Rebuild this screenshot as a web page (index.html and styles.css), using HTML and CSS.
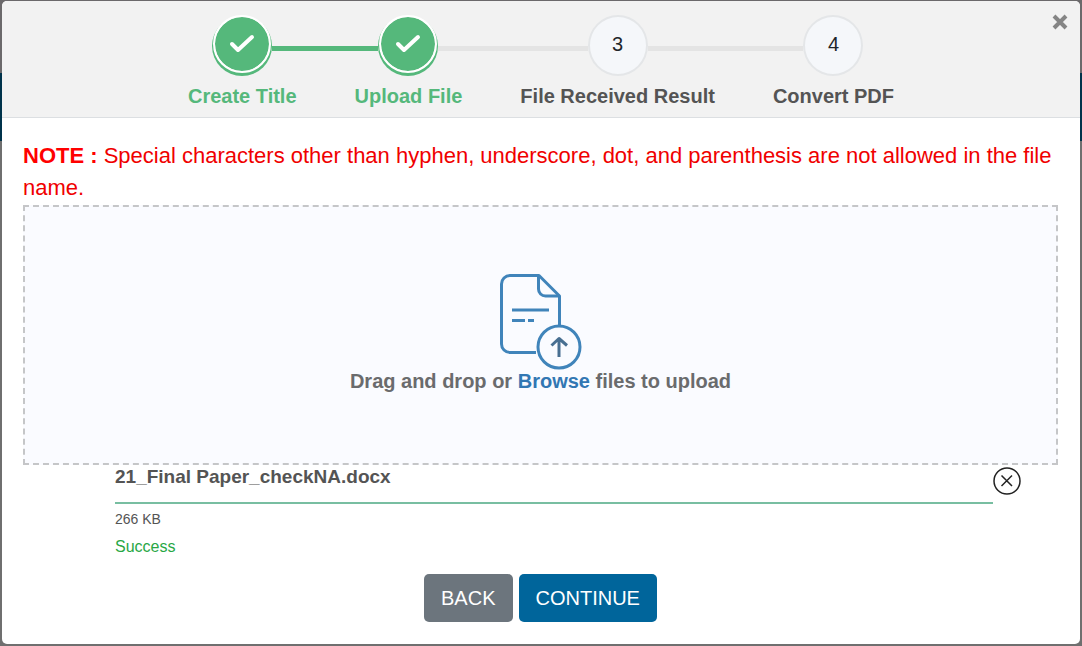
FILE: index.html
```html
<!DOCTYPE html>
<html lang="en">
<head>
<meta charset="utf-8">
<meta name="viewport" content="width=device-width, initial-scale=1">
<title>Upload File</title>
<link rel="stylesheet" href="styles.css">
</head>
<body>
<main class="modal" role="dialog" aria-label="Upload File">
  <header class="modal-header">
    <ol class="steps">
      <li class="step done">
        <div class="track">
          <span class="line hidden"></span>
          <span class="circle"><svg viewBox="0 0 26 20" aria-hidden="true"><path d="M3 10 9 16 23 3"/></svg></span>
          <span class="line filled"></span>
        </div>
        <span class="step-label">Create Title</span>
      </li>
      <li class="step done">
        <div class="track">
          <span class="line filled"></span>
          <span class="circle"><svg viewBox="0 0 26 20" aria-hidden="true"><path d="M3 10 9 16 23 3"/></svg></span>
          <span class="line"></span>
        </div>
        <span class="step-label">Upload File</span>
      </li>
      <li class="step">
        <div class="track">
          <span class="line"></span>
          <span class="circle">3</span>
          <span class="line"></span>
        </div>
        <span class="step-label">File Received Result</span>
      </li>
      <li class="step">
        <div class="track">
          <span class="line"></span>
          <span class="circle">4</span>
          <span class="line hidden"></span>
        </div>
        <span class="step-label">Convert PDF</span>
      </li>
    </ol>
    <button class="close" type="button" aria-label="Close">
      <svg viewBox="0 0 16 16" aria-hidden="true"><path d="M2 2 14 14M14 2 2 14"/></svg>
    </button>
  </header>
  <section class="modal-body">
    <p class="note"><strong>NOTE :</strong> Special characters other than hyphen, underscore, dot, and parenthesis are not allowed in the file name.</p>
    <div class="dropzone">
      <svg class="upload-icon" viewBox="0 0 82 96" aria-hidden="true">
        <path d="M36 78.500H10A8.500 8.500 0 0 1 1.500 70V10A8.500 8.500 0 0 1 10 1.500H39L59.500 22V51"/>
        <path d="M38.500 1.500V15A7 7 0 0 0 45.500 22H59.500"/>
        <path d="M12 36H49M12 46.500H25M28 46.500H34"/>
        <circle cx="59" cy="73" r="21"/>
        <path class="arrow" d="M59 83V64M51.500 71.500 59 64.500 67 71.500"/>
      </svg>
      <p class="drop-text">Drag and drop or <a href="#">Browse</a> files to upload</p>
    </div>
    <div class="file">
      <div class="file-info">
        <div class="file-name">21_Final Paper_checkNA.docx</div>
        <div class="file-size">266 KB</div>
        <div class="file-status">Success</div>
      </div>
      <button class="remove" type="button" aria-label="Remove file">
        <svg viewBox="0 0 28 28" aria-hidden="true"><circle cx="14" cy="14" r="13"/><path d="M8.500 8.500 19 19M19 8.500 8.500 19"/></svg>
      </button>
    </div>
    <div class="actions">
      <button class="btn back" type="button">BACK</button>
      <button class="btn continue" type="button">CONTINUE</button>
    </div>
  </section>
</main>
</body>
</html>
```
FILE: styles.css
```css
* { box-sizing: border-box; }

body {
  margin: 0;
  min-height: 100vh;
  padding: 1px 2px 2px;
  display: flex;
  background: linear-gradient(#6b696b 73px, #00334b 73px, #00334b 141px, #6f6f6f 141px);
  font-family: "Liberation Sans", Arial, sans-serif;
  color: #545454;
}

.modal {
  flex: 1;
  min-width: 0;
  background: #fff;
  border-radius: 5px;
  overflow: hidden;
}

button {
  font: inherit;
  cursor: pointer;
}

.modal-header {
  position: relative;
  padding: 14px 20px 9px;
  background: #f2f2f2;
  border-bottom: 1px solid #dcdfe2;
}

.steps {
  display: flex;
  justify-content: center;
  margin: 0;
  padding: 0;
  list-style: none;
}

.track {
  display: flex;
  align-items: center;
  height: 61px;
}

.line {
  flex: 1;
  height: 5px;
  margin-top: 5px;
  background: #e4e4e4;
}

.line.filled { background: #55b87b; }
.line.hidden { visibility: hidden; }

.circle {
  display: flex;
  align-items: center;
  justify-content: center;
  width: 60px;
  height: 61px;
  padding-bottom: 2px;
  border: 2px solid #e4e6e8;
  border-radius: 50%;
  background: #f5f7fa;
  color: #212529;
  font-size: 20px;
}

.done .circle {
  width: 58px;
  height: 58px;
  margin: 0 1px 3px;
  padding: 0;
  border-color: #fff;
  background: #55b87b;
  background-clip: padding-box;
  box-shadow: 0 2px 0 1px #55b87b;
}

.circle svg {
  width: 26px;
  height: 20px;
  fill: none;
  stroke: #fff;
  stroke-width: 4;
  stroke-linecap: round;
  stroke-linejoin: round;
}

.step-label {
  display: block;
  margin-top: 8px;
  padding: 0 29px;
  font-size: 20px;
  line-height: 24px;
  font-weight: bold;
  text-align: center;
}

.done .step-label { color: #55b87b; }

.close {
  position: absolute;
  top: 13px;
  right: 12px;
  width: 16px;
  height: 16px;
  padding: 0;
  border: 0;
  background: none;
}

.close svg {
  display: block;
  fill: none;
  stroke: #858585;
  stroke-width: 4;
}

.modal-body { padding: 22px 22px 22px 21px; }

.note {
  margin: 0;
  color: #f00000;
  font-size: 22px;
  line-height: 32px;
}

.note strong { color: #f00; }

.dropzone {
  display: flex;
  flex-direction: column;
  align-items: center;
  margin-top: 1px;
  padding: 67px 20px 70px;
  border: 2px dashed #c5c6c8;
  background: #fafbff;
}

.upload-icon {
  width: 82px;
  height: 96px;
  margin-bottom: -1px;
  fill: none;
  stroke: #4084ba;
  stroke-width: 3;
  stroke-linejoin: round;
}

.upload-icon .arrow { stroke: #486f91; }

.drop-text {
  margin: 0;
  color: #6a6b6d;
  font-size: 20px;
  line-height: 24px;
  font-weight: bold;
}

.drop-text a {
  color: #3277b3;
  text-decoration: none;
}

.file {
  display: flex;
  align-items: flex-start;
  margin: 0 37px 0 92px;
}

.file-info { flex: 1; }

.file-name {
  height: 39px;
  border-bottom: 2px solid #78bea1;
  font-size: 19px;
  line-height: 24px;
  font-weight: bold;
}

.file-size {
  margin-top: 5px;
  font-size: 14px;
  line-height: 20px;
}

.file-status {
  margin-top: 6px;
  color: #28a745;
  font-size: 16px;
  line-height: 24px;
}

.remove {
  width: 28px;
  height: 28px;
  margin-top: 2px;
  padding: 0;
  border: 0;
  background: none;
}

.remove svg {
  display: block;
  fill: none;
  stroke: #222;
  stroke-width: 1.5;
}

.actions {
  display: flex;
  justify-content: center;
  gap: 6px;
  margin-top: 15px;
}

.btn {
  padding: 8px 17px;
  border: 0;
  border-radius: 5px;
  color: #fff;
  font-size: 20px;
  line-height: 32px;
}

.back { background: #6c757d; }
.continue { background: #00659b; }
```
